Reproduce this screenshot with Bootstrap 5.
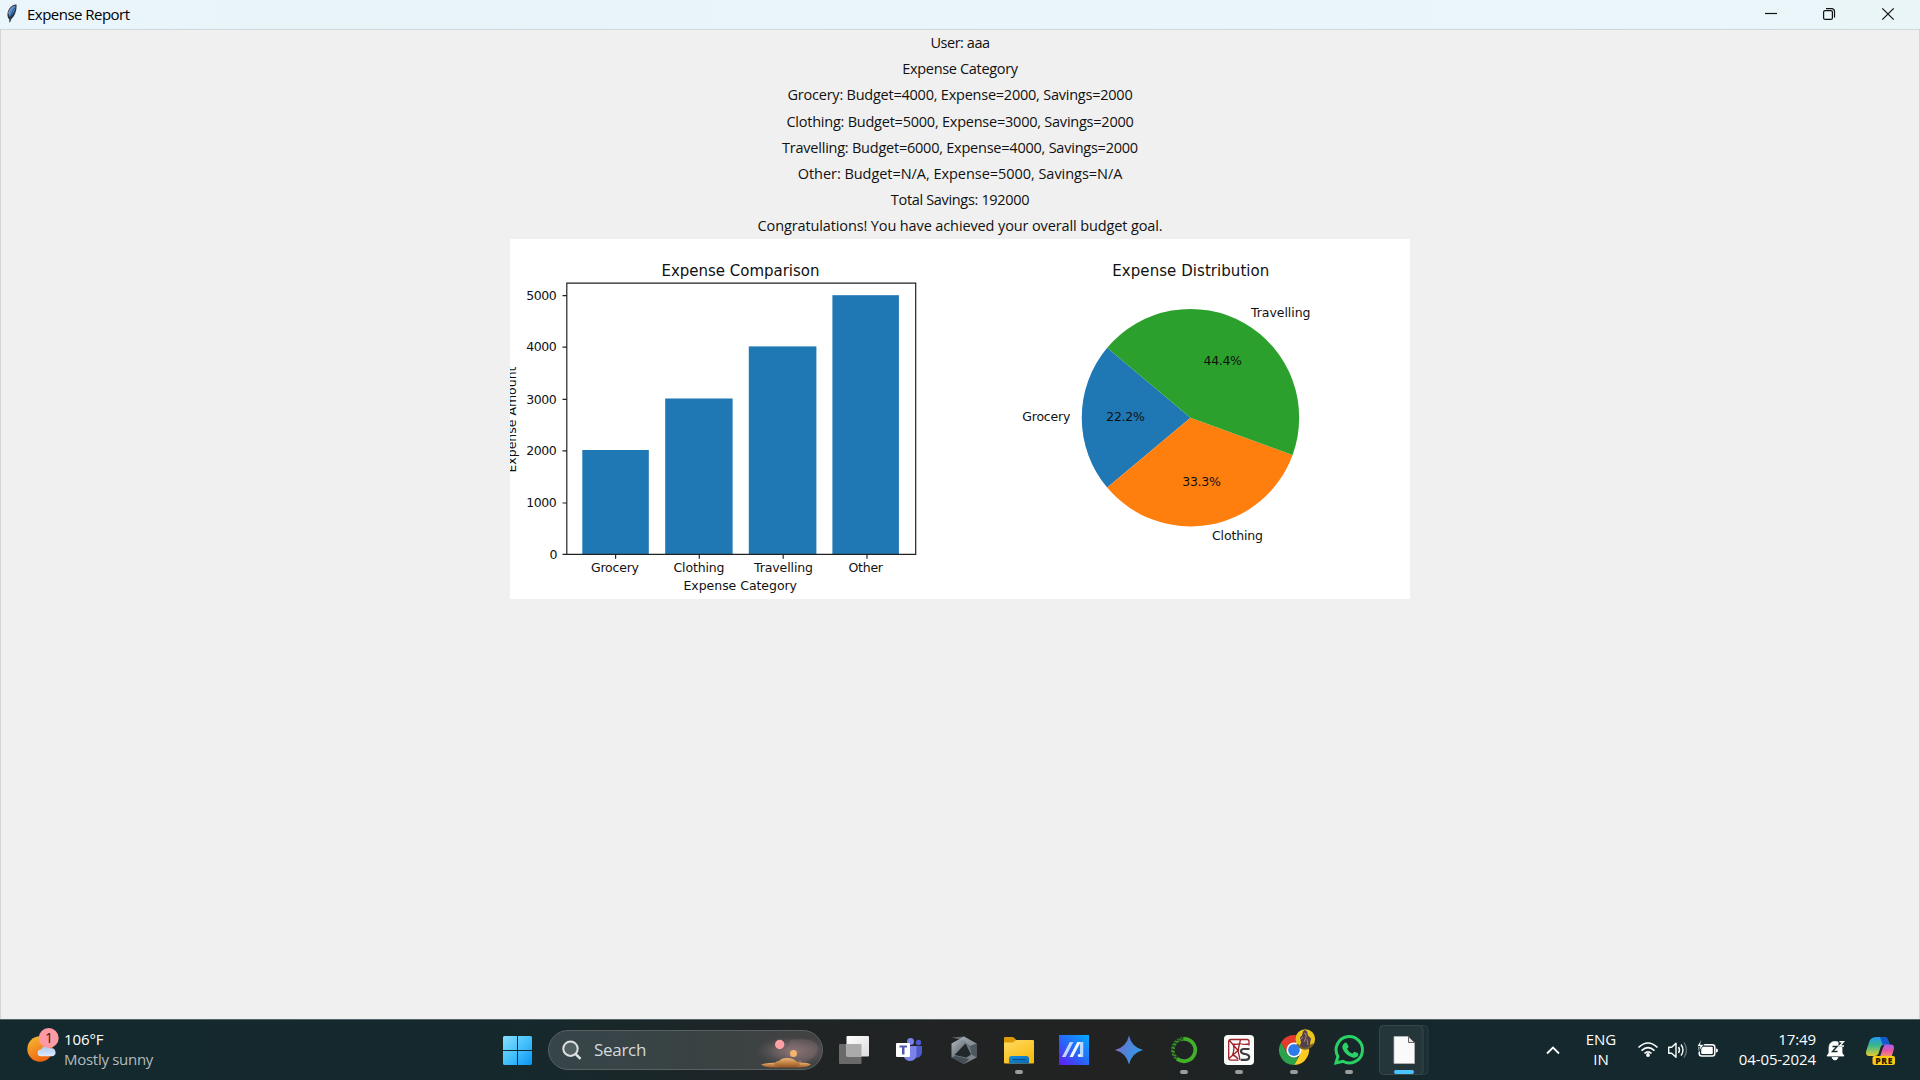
<!DOCTYPE html>
<html lang="en">
<head>
<meta charset="utf-8">
<meta name="viewport" content="width=device-width, initial-scale=1">
<title>Expense Report</title>
<link href="https://cdn.jsdelivr.net/npm/bootstrap@5.3.0/dist/css/bootstrap.min.css" rel="stylesheet">
<style>
  html, body { height: 100%; overflow: hidden; }
  body { font-family: "Open Sans", "Noto Sans", sans-serif; font-size: 15px; color: #000; background: #f0f0f0; }
  svg { display: block; flex: none; }
  .title-bar { height: 29px; background: linear-gradient(90deg, #eaf6fb, #e8f4f8 15%, #e9f5fb 60%, #eaf6fb 90%, #e9f5f6); }
  .title-text { letter-spacing: -.52px; line-height: 20px; margin-top: -1px; }
  .client-area { border: 1px solid #d2d6d8; border-bottom: 0; min-height: 0; }
  .report-line { line-height: 26.2px; font-size: 14.5px; letter-spacing: -.23px; color: #111; }
  .fit-tight { letter-spacing: -.45px; }
  .fit-snug { letter-spacing: -.33px; }
  .fit-loose { letter-spacing: -.12px; }
  .fit-wide { letter-spacing: -.04px; }
  .report-lines { height: 209px; }
  .figure-panel { width: 900px; height: 360px; background: #fff; }
  .plot-text { font-family: "DejaVu Sans", sans-serif; font-size: 12.5px; fill: #111; }
  .plot-title { font-size: 15px; }
  .task-bar { height: 61px; border-top: 1px solid #566568; color: #fff;
    background: linear-gradient(90deg, #14292e 0, #15292d 26%, #202425 42%, #222222 58%, #1d2425 66%, #14282d 75%, #14292e 100%); }
  .weather { width: 489px; padding-left: 22px; line-height: 20px; }
  .weather-text { margin-top: -3px; letter-spacing: -.1px; }
  .dim { color: #b3bcbe; letter-spacing: -.28px; }
  .search-pill { width: 275px; height: 40px; margin: 10px 3px 10px 4px; border-radius: 20px; border: 1px solid #596163; overflow: hidden;
    background: linear-gradient(90deg, #36454a, #3a4242 60%, #434243); color: #d5dadb; font-size: 17px; line-height: 38px; }
  .search-label { margin-left: 11px; letter-spacing: -.3px; }
  .tray-text { line-height: 20px; padding-top: 9px; }
  .lang { width: 50px; }
  .clock { width: 90px; letter-spacing: -.1px; }
</style>
</head>
<body class="d-flex flex-column">

<header class="title-bar d-flex align-items-center flex-shrink-0">
  <svg width="27" height="29" viewBox="0 0 27 29">
    <path d="M16.5 4.5C12 4 8 9 7.5 13.5c-.3 3 .6 5 1.800 6L9.800 23l1.200-3.500C15 16 17 10 16.500 4.500z" fill="#2a3440"/>
    <path d="M15.500 5.500C12 6.500 9.500 10 8.700 14l1 3C13.500 14 15.500 10 15.500 5.500z" fill="#4f8bd8"/>
    <path d="M14.500 8C12.500 11 10.500 15 9.800 22" fill="none" stroke="#2b4468" stroke-width=".8"/>
    <path d="M8.500 13.500c.8-3 2.500-5.500 5-7.200" fill="none" stroke="#a9b3bd" stroke-width="1"/>
  </svg>
  <span class="title-text">Expense Report</span>
  <svg class="ms-auto" width="178" height="29" viewBox="1742 0 178 29" fill="none" stroke="#111" stroke-width="1.200">
    <path d="M1765 13.500h12"/>
    <rect x="1823.600" y="10.600" width="8.800" height="8.800" rx="1.500"/>
    <path d="M1826 8.600h5.500a3 3 0 0 1 3 3v5.900"/>
    <path d="M1882.300 8.300l11.400 11.400M1893.700 8.300l-11.400 11.400"/>
  </svg>
</header>

<main class="client-area flex-grow-1 d-flex flex-column align-items-center">
  <div class="report-lines text-center">
    <div class="report-line fit-tight">User: aaa</div>
    <div class="report-line fit-snug">Expense Category</div>
    <div class="report-line">Grocery: Budget=4000, Expense=2000, Savings=2000</div>
    <div class="report-line">Clothing: Budget=5000, Expense=3000, Savings=2000</div>
    <div class="report-line">Travelling: Budget=6000, Expense=4000, Savings=2000</div>
    <div class="report-line fit-wide">Other: Budget=N/A, Expense=5000, Savings=N/A</div>
    <div class="report-line fit-snug">Total Savings: 192000</div>
    <div class="report-line fit-loose">Congratulations! You have achieved your overall budget goal.</div>
  </div>
  <section class="figure-panel">
    <svg width="900" height="360" viewBox="510 239 900 360">
      <g class="plot-text">
        <text class="plot-title" x="661.500" y="275.600" textLength="158">Expense Comparison</text>
        <g fill="#1f77b4">
          <rect x="582.300" y="450" width="66.500" height="104"/>
          <rect x="665.200" y="398.500" width="67.400" height="155.500"/>
          <rect x="748.800" y="346.400" width="67.600" height="207.600"/>
          <rect x="832.400" y="295.200" width="66.500" height="258.800"/>
        </g>
        <path d="M566.800 283.200H915.700V554.300H566.800zM562.500 295.600h4.300M562.500 347.200h4.300M562.500 399.400h4.300M562.500 450.800h4.300M562.500 503h4.300M562.500 554.300h4.300M615.600 554.300v4.500M699.300 554.300v4.500M783.200 554.300v4.500M867 554.300v4.500" fill="none" stroke="#222" stroke-width="1.200"/>
        <text x="526.300" y="299.900" textLength="30.500">5000</text>
        <text x="526.300" y="351.300" textLength="30.500">4000</text>
        <text x="526.300" y="403.500" textLength="30.500">3000</text>
        <text x="526.300" y="455" textLength="30.500">2000</text>
        <text x="526.300" y="507.300" textLength="30.500">1000</text>
        <text x="549.600" y="558.600">0</text>
        <text x="591" y="572.200" textLength="48">Grocery</text>
        <text x="673.500" y="572.200" textLength="51">Clothing</text>
        <text x="754" y="572.200" textLength="59">Travelling</text>
        <text x="848.500" y="572.200" textLength="34.500">Other</text>
        <text x="683.500" y="590" textLength="113.500">Expense Category</text>
        <text transform="translate(516.300 472.500) rotate(-90)" textLength="106">Expense Amount</text>

        <text class="plot-title" x="1112.300" y="275.600" textLength="157">Expense Distribution</text>
        <path d="M1190.500 417.700L1107.200 347.800A108.700 108.700 0 0 0 1107.200 487.600z" fill="#1f77b4"/>
        <path d="M1190.500 417.700L1107.200 487.600A108.700 108.700 0 0 0 1292.600 454.900z" fill="#ff7f0e"/>
        <path d="M1190.500 417.700L1292.600 454.900A108.700 108.700 0 0 0 1107.200 347.800z" fill="#2ca02c"/>
        <text x="1022.300" y="421.200" textLength="48">Grocery</text>
        <text x="1251" y="317.400" textLength="59.500">Travelling</text>
        <text x="1212" y="540" textLength="51">Clothing</text>
        <text x="1106.300" y="421.200" textLength="38.500">22.2%</text>
        <text x="1203.500" y="365" textLength="38.500">44.4%</text>
        <text x="1182.300" y="486.200" textLength="38.500">33.3%</text>
      </g>
    </svg>
  </section>
</main>

<footer class="task-bar d-flex flex-shrink-0">
  <div class="weather d-flex flex-shrink-0 align-items-center">
    <svg width="42" height="60" viewBox="22 1020 42 60">
      <defs>
        <linearGradient id="sun" x1="0" y1="0" x2=".5" y2="1"><stop offset="0" stop-color="#f5bd35"/><stop offset="1" stop-color="#f0650f"/></linearGradient>
        <linearGradient id="cloud" x1="0" y1="0" x2="0" y2="1"><stop offset="0" stop-color="#a9c9f5"/><stop offset="1" stop-color="#dfe9fb"/></linearGradient>
      </defs>
      <circle cx="40" cy="1049" r="12.700" fill="url(#sun)"/>
      <path d="M41 1056.200a3.300 3.300 0 0 1 0-6.600 5.500 5.500 0 0 1 9.500-1.200 4 4 0 0 1 2 7.800z" fill="url(#cloud)"/>
      <circle cx="48.700" cy="1038" r="10" fill="#ff99a4"/>
      <text x="45" y="1043" font-size="14" fill="#2b1b1d">1</text>
    </svg>
    <div class="weather-text"><div>106°F</div><div class="dim">Mostly sunny</div></div>
  </div>

  <!-- Start -->
  <svg width="55" height="60" viewBox="489 1020 55 60">
    <defs><linearGradient id="win" gradientUnits="userSpaceOnUse" x1="503" y1="1036" x2="532" y2="1065"><stop offset="0" stop-color="#87e0fd"/><stop offset=".5" stop-color="#45c1fb"/><stop offset="1" stop-color="#0a93f5"/></linearGradient></defs>
    <path d="M504 1036h13v14h-14v-13zM518 1036h13l1 1v13h-14zM503 1051h14v14h-13l-1-1zM518 1051h14v13l-1 1h-13z" fill="url(#win)"/>
  </svg>

  <div class="search-pill d-flex flex-shrink-0">
    <svg width="34" height="38" viewBox="549 1031 34 38" fill="none" stroke="#dde1e2" stroke-width="2">
      <circle cx="570.500" cy="1048.700" r="7.200" fill="#536063"/><path d="M575.500 1053.800l5 5" stroke-width="2.600"/>
    </svg>
    <span class="search-label">Search</span>
    <svg class="ms-auto" width="68" height="38" viewBox="754 1031 68 38">
      <defs>
        <radialGradient id="haze"><stop offset="0" stop-color="#8f7678"/><stop offset=".5" stop-color="#75666a" stop-opacity=".7"/><stop offset="1" stop-color="#5c5354" stop-opacity="0"/></radialGradient>
        <linearGradient id="sand" x1="0" y1="0" x2="0" y2="1"><stop offset="0" stop-color="#efb672"/><stop offset="1" stop-color="#9a5724"/></linearGradient>
      </defs>
      <ellipse cx="793" cy="1051" rx="38" ry="15" fill="url(#haze)"/>
      <path d="M790 1040q27-3 28 8-1 10-14 15h-20z" fill="#8b7373" opacity=".3"/>
      <path d="M761 1064.500q5-2 18-2h20q10 0 12 2-4 3-10 3h-27q-9 0-13-3z" fill="url(#sand)"/>
      <path d="M774 1065q1-4 5-4 2-3 8-3t9 3q4 1 4 4l-4 2h-16z" fill="url(#sand)"/>
      <circle cx="779.700" cy="1044.500" r="4.700" fill="#ffa0a4"/>
      <circle cx="793.500" cy="1053.500" r="3.500" fill="#f5b36e"/>
      <circle cx="800" cy="1061" r=".8" fill="#c88e69"/>
    </svg>
  </div>

  <!-- Task view -->
  <svg width="55" height="60" viewBox="826 1020 55 60">
    <defs><linearGradient id="tv" x1="0" y1="0" x2="1" y2="1"><stop offset="0" stop-color="#fff"/><stop offset="1" stop-color="#dcdcdc"/></linearGradient></defs>
    <rect x="839" y="1044" width="22.500" height="20" rx="1" fill="#6a6a6a"/>
    <rect x="846.500" y="1036" width="22.500" height="20.500" rx="1" fill="url(#tv)"/>
    <path d="M846.500 1044h15v12.500h-15z" fill="#aaa"/>
  </svg>
  <!-- Teams -->
  <svg width="55" height="60" viewBox="881 1020 55 60">
    <circle cx="918.500" cy="1042.500" r="2.700" fill="#5059c9"/><circle cx="910.500" cy="1041.500" r="3.500" fill="#7b83eb"/>
    <path d="M915 1046h7v7q-1 5-7 5z" fill="#5059c9"/>
    <path d="M903 1046h13.500v8q0 7-6.500 7-5 0-7-6z" fill="#7b83eb"/>
    <rect x="896" y="1043" width="14" height="14" rx="1" fill="#fff"/>
    <path d="M899.500 1045.500h7.500v2h-2.500v7h-2.500v-7h-2.500z" fill="#5558af"/>
  </svg>
  <!-- Hexagon app -->
  <svg width="55" height="60" viewBox="936 1020 55 60">
    <defs><linearGradient id="hexg" x1="0" y1="0" x2="1" y2="1"><stop offset="0" stop-color="#b9c2c9"/><stop offset=".5" stop-color="#69727a"/><stop offset="1" stop-color="#8c959c"/></linearGradient></defs>
    <path d="M964 1036.500l12.500 7v14L964 1064l-12.500-6.500v-14z" fill="url(#hexg)"/>
    <path d="M964 1036.500l12.500 7-6.500 2.500-5.500-5.500-13-3z" fill="#a7b0b7" opacity=".5"/>
    <path d="M965.500 1043.500l5.500 11-4.500 3-12-2.500z" fill="#22272a"/>
    <path d="M951.500 1057.500l4-1.500 14 3-5.500 5z" fill="#454e55"/>
    <path d="M970 1046l6.500-2.500v14l-5-3z" fill="#4e5860"/>
  </svg>
  <!-- Explorer -->
  <svg width="55" height="60" viewBox="991 1020 55 60">
    <defs>
      <linearGradient id="fold" x1="0" y1="0" x2=".6" y2="1"><stop offset="0" stop-color="#ffdc63"/><stop offset="1" stop-color="#f9ba10"/></linearGradient>
      <linearGradient id="fblue" x1="0" y1="0" x2="1" y2="1"><stop offset="0" stop-color="#1592df"/><stop offset="1" stop-color="#0a66b5"/></linearGradient>
    </defs>
    <path d="M1004 1038q0-1 1-1h8l3.500 3h15.500v8h-28z" fill="#dc9a05"/>
    <path d="M1004 1042.500h9l3-2.500h17q1 0 1 1v21.500q0 1-1 1h-28q-1 0-1-1z" fill="url(#fold)"/>
    <path d="M1009 1063.500v-5q0-2.500 2.500-2.500h15q2.500 0 2.500 2.500v5z" fill="url(#fblue)"/>
    <path d="M1012.500 1059.500h13" stroke="#0a4f86" stroke-width="1.200"/>
    <rect x="1015" y="1070" width="8" height="4" rx="2" fill="#9b9c9c"/>
  </svg>
  <!-- MyASUS -->
  <svg width="55" height="60" viewBox="1046 1020 55 60">
    <defs><linearGradient id="asus" x1="0" y1="1" x2="1" y2="0"><stop offset="0" stop-color="#6418f5"/><stop offset=".45" stop-color="#2a62f8"/><stop offset="1" stop-color="#04aaff"/></linearGradient></defs>
    <path d="M1059 1035h30v30h-30z" fill="url(#asus)"/>
    <path d="M1062 1057l7.800-15h3.600l-7.800 15z" fill="#c3d8ff"/>
    <path d="M1069.500 1057l7.800-15h3.400l-7.800 15z" fill="#f2f6ff"/>
    <path d="M1080 1042h3.300v15h-3.300z" fill="#b9d8ff"/>
    <circle cx="1079.300" cy="1055.500" r="1.500" fill="#fff"/>
  </svg>
  <!-- Four-point star -->
  <svg width="55" height="60" viewBox="1101 1020 55 60">
    <defs><linearGradient id="star" x1="0" y1="0" x2="1" y2=".4"><stop offset="0" stop-color="#c66a92"/><stop offset=".38" stop-color="#5c7bd6"/><stop offset="1" stop-color="#2e9bea"/></linearGradient></defs>
    <path d="M1129 1035.500q2.500 11.500 14 14.500-11.500 3-14 14.500-2.500-11.500-14-14.500 11.500-3 14-14.500z" fill="url(#star)"/>
  </svg>
  <!-- Anaconda -->
  <svg width="55" height="60" viewBox="1156 1020 55 60" fill="none">
    <path d="M1184 1038.800a11.200 11.200 0 1 1-7 19.900" stroke="#43b02a" stroke-width="3.800"/>
    <path d="M1184 1038.800a11.200 11.200 0 0 0-7 19.900" stroke="#3a8f2a" stroke-width="3.800"/>
    <path d="M1176 1060a12.500 12.500 0 0 1 7-22.400M1177.500 1057.500a9.800 9.800 0 0 1 5-17" stroke="#1c2a20" stroke-width="1.500" stroke-dasharray="1.700 2"/>
    <path d="M1176.500 1058.500a11.200 11.200 0 0 1 7-19.700" stroke="#1c2a20" stroke-width="1.200" stroke-dasharray="1.500 2.200" stroke-dashoffset="1.800"/>
    <rect x="1180" y="1070" width="8" height="4" rx="2" fill="#9b9c9c"/>
  </svg>
  <!-- Spyder -->
  <svg width="55" height="60" viewBox="1211 1020 55 60" fill="none">
    <rect x="1224" y="1035" width="30" height="30" rx="4" fill="#fbfafa"/>
    <path d="M1249 1045.500v-4q0-2-2-2h-16q-2.300 0-2.300 2.300v16q0 2.300 2.300 2.300h7.500M1229.500 1040.500l8.500 10 11-3M1238 1050.500l-9 8M1238 1050.500l2 9.500M1240.500 1039.500l-2.500 11M1232.500 1044q5 1 7-.5 5 1.500 9.500.5M1233 1044q2 5-.5 11 3 .5 5.500 4" stroke="#9f2227" stroke-width="1.300"/>
    <path d="M1249.500 1049h-5.500q-3 0-3 2.300 0 2 3 2.500l2.200.5q3 .7 3 2.800 0 2.800-3.500 2.800h-5" stroke="#fff" stroke-width="4"/>
    <path d="M1249.500 1049h-5.500q-3 0-3 2.300 0 2 3 2.500l2.200.5q3 .7 3 2.800 0 2.800-3.500 2.800h-5" stroke="#3b3d41" stroke-width="2.200"/>
    <rect x="1235" y="1070" width="8" height="4" rx="2" fill="#9b9c9c"/>
  </svg>
  <!-- Chrome -->
  <svg width="55" height="60" viewBox="1266 1020 55 60">
    <path d="M1294 1065A15 15 0 0 0 1307 1042.500H1294L1300.500 1053.500z" fill="#fdcc22"/>
    <path d="M1281 1042.500l6.500 11.200 6.500-3.700v-7.500h13q-4-7.500-13-7.500-8.500 0-13 7.500z" fill="#e33b2e"/>
    <path d="M1281 1042.500l6.500 11.200q3 4 7 3.500h4l-4.500 7.800A15 15 0 0 1 1281 1042.500z" fill="#2ba24c"/>
    <circle cx="1294" cy="1050" r="7.500" fill="#fff"/><circle cx="1294" cy="1050" r="5.900" fill="#2e7bea"/>
    <circle cx="1305.300" cy="1039" r="9.800" fill="#e8c51d"/>
    <path d="M1303 1031.500q2-3 4 0l1 4 3 3-1 5 1 4q-6 3-12 0l2-5-1-5 2-2z" fill="#53404a"/>
    <path d="M1304 1033l2 1v3l-2 5M1307 1039l1 6M1300 1040l3-3" stroke="#a9857a" fill="none"/>
    <path d="M1297 1044q4 5 8 4.800 4 0 8-4.800" stroke="#77612b" stroke-width="2" fill="none"/>
    <rect x="1290" y="1070" width="8" height="4" rx="2" fill="#9b9c9c"/>
  </svg>
  <!-- WhatsApp -->
  <svg width="55" height="60" viewBox="1321 1020 55 60">
    <path d="M1336 1063l1.900-6.600a13.200 13.200 0 1 1 5 4.900z" fill="none" stroke="#28d267" stroke-width="3"/>
    <path d="M1344.500 1043q1.200-1 2.300 0l1.800 3.500q0 1-1.500 2.300 1.500 3.500 5.300 5 1.500-2.200 2.500-2l3.300 1.700q.6 1-.5 2.800-2 2-5 1.300-8-2.500-10.500-9.800-.3-3 2.300-4.800z" fill="#28d267"/>
    <rect x="1345" y="1070" width="8" height="4" rx="2" fill="#9b9c9c"/>
  </svg>
  <!-- Active window -->
  <svg width="55" height="60" viewBox="1376 1020 55 60">
    <path d="M1421 1025.500h3q4 0 4 4v41q0 4-4 4h-3" fill="#1c2f34" stroke="#2b3f43"/>
    <rect x="1379.500" y="1025.500" width="43.500" height="49" rx="4" fill="#24363a" stroke="#37484b"/>
    <path d="M1394 1036.500h14.500l6 6v21h-20.500z" fill="#fafafa" stroke="#b5b5b5" stroke-width=".8"/>
    <path d="M1408.500 1036.500v6h6z" fill="#e4e4e4" stroke="#555" stroke-width=".9"/>
    <rect x="1394" y="1070" width="20" height="4" rx="2" fill="#4cc2ff"/>
  </svg>

  <div class="d-flex ms-auto flex-shrink-0">
    <svg width="46" height="60" viewBox="1530 1020 46 60"><path d="M1547 1053.500l6-6 6 6" fill="none" stroke="#fff" stroke-width="1.800"/></svg>
    <div class="tray-text lang text-center"><div>ENG</div><div>IN</div></div>
    <svg width="100" height="60" viewBox="1626 1020 100 60" fill="none" stroke="#fff">
      <path d="M1638.500 1047.500q9.500-9 19 0M1641.500 1050.700q6.500-6 13 0M1644.500 1053.500q3.500-3.300 7 0" stroke-width="1.600"/>
      <circle cx="1648" cy="1055" r="1.900" fill="#fff" stroke="none"/>
      <path d="M1668.700 1047.200h3l4.300-4v14l-4.300-4h-3z" stroke-width="1.400" stroke-linejoin="round"/>
      <path d="M1678.500 1047q2 3 0 6M1681 1044.500q4 5.500 0 11" stroke-width="1.400"/>
      <path d="M1684 1042.500q5 7.500 0 15" stroke="#667478" stroke-width="1.300"/>
      <rect x="1699.200" y="1044.700" width="15.600" height="11.300" rx="2.500" stroke-width="1.500"/>
      <rect x="1701.200" y="1046.800" width="11.600" height="7.200" rx="1" fill="#fff" stroke="none"/>
      <path d="M1716 1048.500q2 0 2 2t-2 2z" fill="#fff" stroke="none"/>
      <path d="M1701.500 1039l-4.500 7.500h3l-1.500 5.500 5.500-7.500h-3.500z" fill="#fff" stroke="#14292e" stroke-width=".8"/>
    </svg>
    <div class="tray-text clock text-end"><div>17:49</div><div>04-05-2024</div></div>
    <svg width="40" height="60" viewBox="1816 1020 40 60">
      <path d="M1829 1053v-5q0-6.500 6-6.500t7 6v5.500l2 3h-17zM1832 1057.500h6q-1 2.500-3 2.500t-3-2.500z" fill="#fff" stroke="#fff" stroke-width=".8" stroke-linejoin="round"/>
      <path d="M1832.500 1046.500h4.500l-4.500 5h5" fill="none" stroke="#14292e" stroke-width="1.400"/>
      <path d="M1838.500 1040h6v7h-6z" fill="#14292e"/>
      <path d="M1839.500 1041.700h4l-4 4.300h4.500" fill="none" stroke="#fff" stroke-width="1.400"/>
    </svg>
    <svg width="64" height="60" viewBox="1856 1020 64 60">
      <defs>
        <linearGradient id="cpA" x1="0" y1="0" x2="0" y2="1"><stop offset="0" stop-color="#1e9bf0"/><stop offset=".45" stop-color="#3bb68b"/><stop offset="1" stop-color="#e5cd2e"/></linearGradient>
        <linearGradient id="cpB" x1="0" y1="0" x2="0" y2="1"><stop offset="0" stop-color="#a95df0"/><stop offset=".5" stop-color="#e8559e"/><stop offset="1" stop-color="#f59a6a"/></linearGradient>
      </defs>
      <path d="M1877 1037h7q3 0 4 3l1.500 4.500h-5q-3 0-4 3l-2 6q-1 2.500-4 2.500h-5q-4.500 0-3.300-5l3.300-10q1.500-4 7.500-4z" fill="url(#cpA)"/>
      <path d="M1880 1037h4q3 0 4 3l1.500 4.500h-7z" fill="#1459d0"/>
      <path d="M1884.500 1044.500h6q4.500 0 3.300 5l-2.300 7.500h-11.500l2.500-8z" fill="url(#cpB)"/>
      <rect x="1872.500" y="1056" width="22.500" height="9" rx="2" fill="#ffc90e"/>
      <text x="1875.300" y="1063.700" font-size="8.500" font-weight="800" textLength="17" fill="#211a00">PRE</text>
    </svg>
  </div>
</footer>
<script src="https://cdn.jsdelivr.net/npm/bootstrap@5.3.0/dist/js/bootstrap.bundle.min.js"></script>
</body>
</html>
